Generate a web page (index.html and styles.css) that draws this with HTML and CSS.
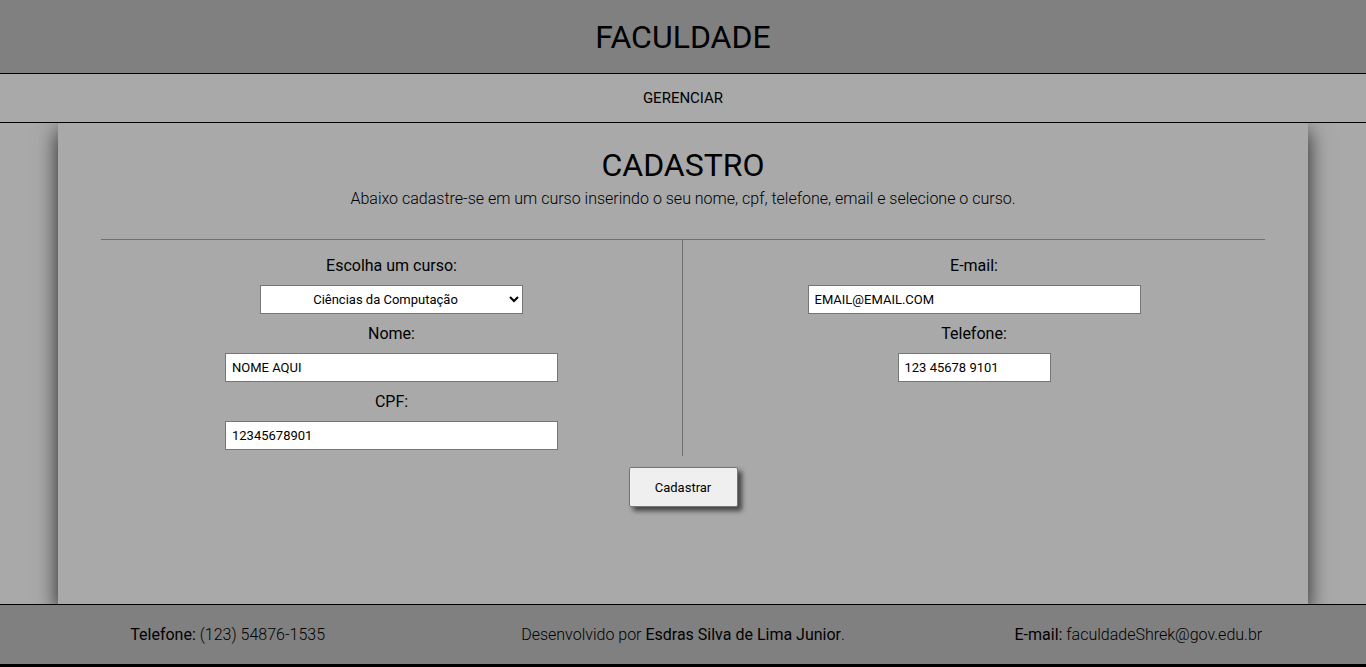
FILE: index.html
```html
<!DOCTYPE html>
<html lang="pt-br">
<head>
<meta charset="utf-8">
<title>Faculdade</title>
<link rel="stylesheet" href="styles.css">
</head>
<body>
<div class="page">
  <header class="top">
    <h1 class="brand">FACULDADE</h1>
  </header>
  <nav class="nav">
    <a class="nav-link" href="#">GERENCIAR</a>
  </nav>
  <main class="main">
    <section class="card">
      <h1 class="card-title">CADASTRO</h1>
      <p class="card-sub">Abaixo cadastre-se em um curso inserindo o seu nome, cpf, telefone, email e selecione o curso.</p>
      <form class="form">
        <div class="cols">
          <div class="col col-left">
            <label class="lbl">Escolha um curso:</label>
            <select class="sel">
              <option>Ciências da Computação</option>
            </select>
            <label class="lbl">Nome:</label>
            <input class="inp" type="text" value="NOME AQUI">
            <label class="lbl">CPF:</label>
            <input class="inp" type="text" value="12345678901">
          </div>
          <div class="col">
            <label class="lbl">E-mail:</label>
            <input class="inp" type="text" value="EMAIL@EMAIL.COM">
            <label class="lbl">Telefone:</label>
            <input class="inp inp-small" type="text" value="123 45678 9101">
          </div>
        </div>
        <button class="btn" type="button">Cadastrar</button>
      </form>
    </section>
  </main>
  <footer class="foot">
    <div class="foot-item"><b>Telefone:</b> (123) 54876-1535</div>
    <div class="foot-item">Desenvolvido por <b>Esdras Silva de Lima Junior</b>.</div>
    <div class="foot-item"><b>E-mail:</b> faculdadeShrek@gov.edu.br</div>
  </footer>
</div>
</body>
</html>
```

FILE: styles.css
```css
* { box-sizing: border-box; }
html, body { margin: 0; padding: 0; height: 100%; }
body {
  background: #a9a9a9;
  font-family: Roboto, "Liberation Sans", sans-serif;
  color: #000;
}
.page {
  display: flex;
  flex-direction: column;
  height: 100vh;
  overflow: hidden;
}
.top {
  background: #808080;
  height: 74px;
  border-bottom: 1px solid #000;
  display: flex;
  align-items: center;
  justify-content: center;
  flex: none;
  position: relative;
  z-index: 2;
}
.brand {
  margin: 0;
  font-size: 32px;
  font-weight: 400;
  line-height: 1;
}
.nav {
  height: 49px;
  background: #a9a9a9;
  border-bottom: 1px solid #000;
  display: flex;
  align-items: center;
  justify-content: center;
  flex: none;
  position: relative;
  z-index: 2;
}
.nav-link {
  color: #000;
  text-decoration: none;
  font-size: 15px;
}
.main {
  flex: 1;
  display: flex;
  justify-content: center;
  min-height: 0;
}
.card {
  width: 1250px;
  background: #a9a9a9;
  box-shadow: 0 8px 20px rgba(0,0,0,0.8);
  padding: 24px 43px 0;
  text-align: center;
  position: relative;
  z-index: 1;
}
.card-title {
  margin: 0;
  font-size: 32px;
  font-weight: 400;
  line-height: 36px;
}
.card-sub {
  margin: 6px 0 0;
  font-size: 16px;
  font-weight: 300;
  line-height: 20px;
}
.form {
  margin-top: 30px;
  display: flex;
  flex-direction: column;
  align-items: center;
}
.cols {
  width: 100%;
  display: grid;
  grid-template-columns: 1fr 1fr;
  border-top: 1px solid #707070;
}
.col {
  display: flex;
  flex-direction: column;
  align-items: center;
  gap: 10px;
  padding: 16px 0 6px;
}
.col-left { border-right: 1px solid #707070; }
.lbl {
  font-size: 16px;
  line-height: 19px;
}
.inp, .sel {
  height: 29px;
  width: 333px;
  border: 1px solid #767676;
  background: #fff;
  font-family: Roboto, "Liberation Sans", sans-serif;
  font-size: 13px;
  padding: 0 6px;
  color: #000;
  border-radius: 0;
}
.sel {
  width: 263px;
  text-align: center;
  text-align-last: center;
}
.inp-small { width: 153px; }
.btn {
  margin-top: 11px;
  width: 109px;
  height: 40px;
  background: #efefef;
  border: 1px solid #767676;
  border-radius: 2px;
  box-shadow: 4px 4px 5px rgba(0,0,0,0.6);
  font-family: Roboto, "Liberation Sans", sans-serif;
  font-size: 13px;
  color: #000;
}
.foot {
  flex: none;
  height: 63px;
  background: #808080;
  border-top: 1px solid #000;
  border-bottom: 3px solid #000;
  display: grid;
  grid-template-columns: 1fr 1fr 1fr;
  align-items: center;
  text-align: center;
  font-size: 16px;
  font-weight: 300;
  position: relative;
  z-index: 2;
}
.foot b { font-weight: 400; }
```
